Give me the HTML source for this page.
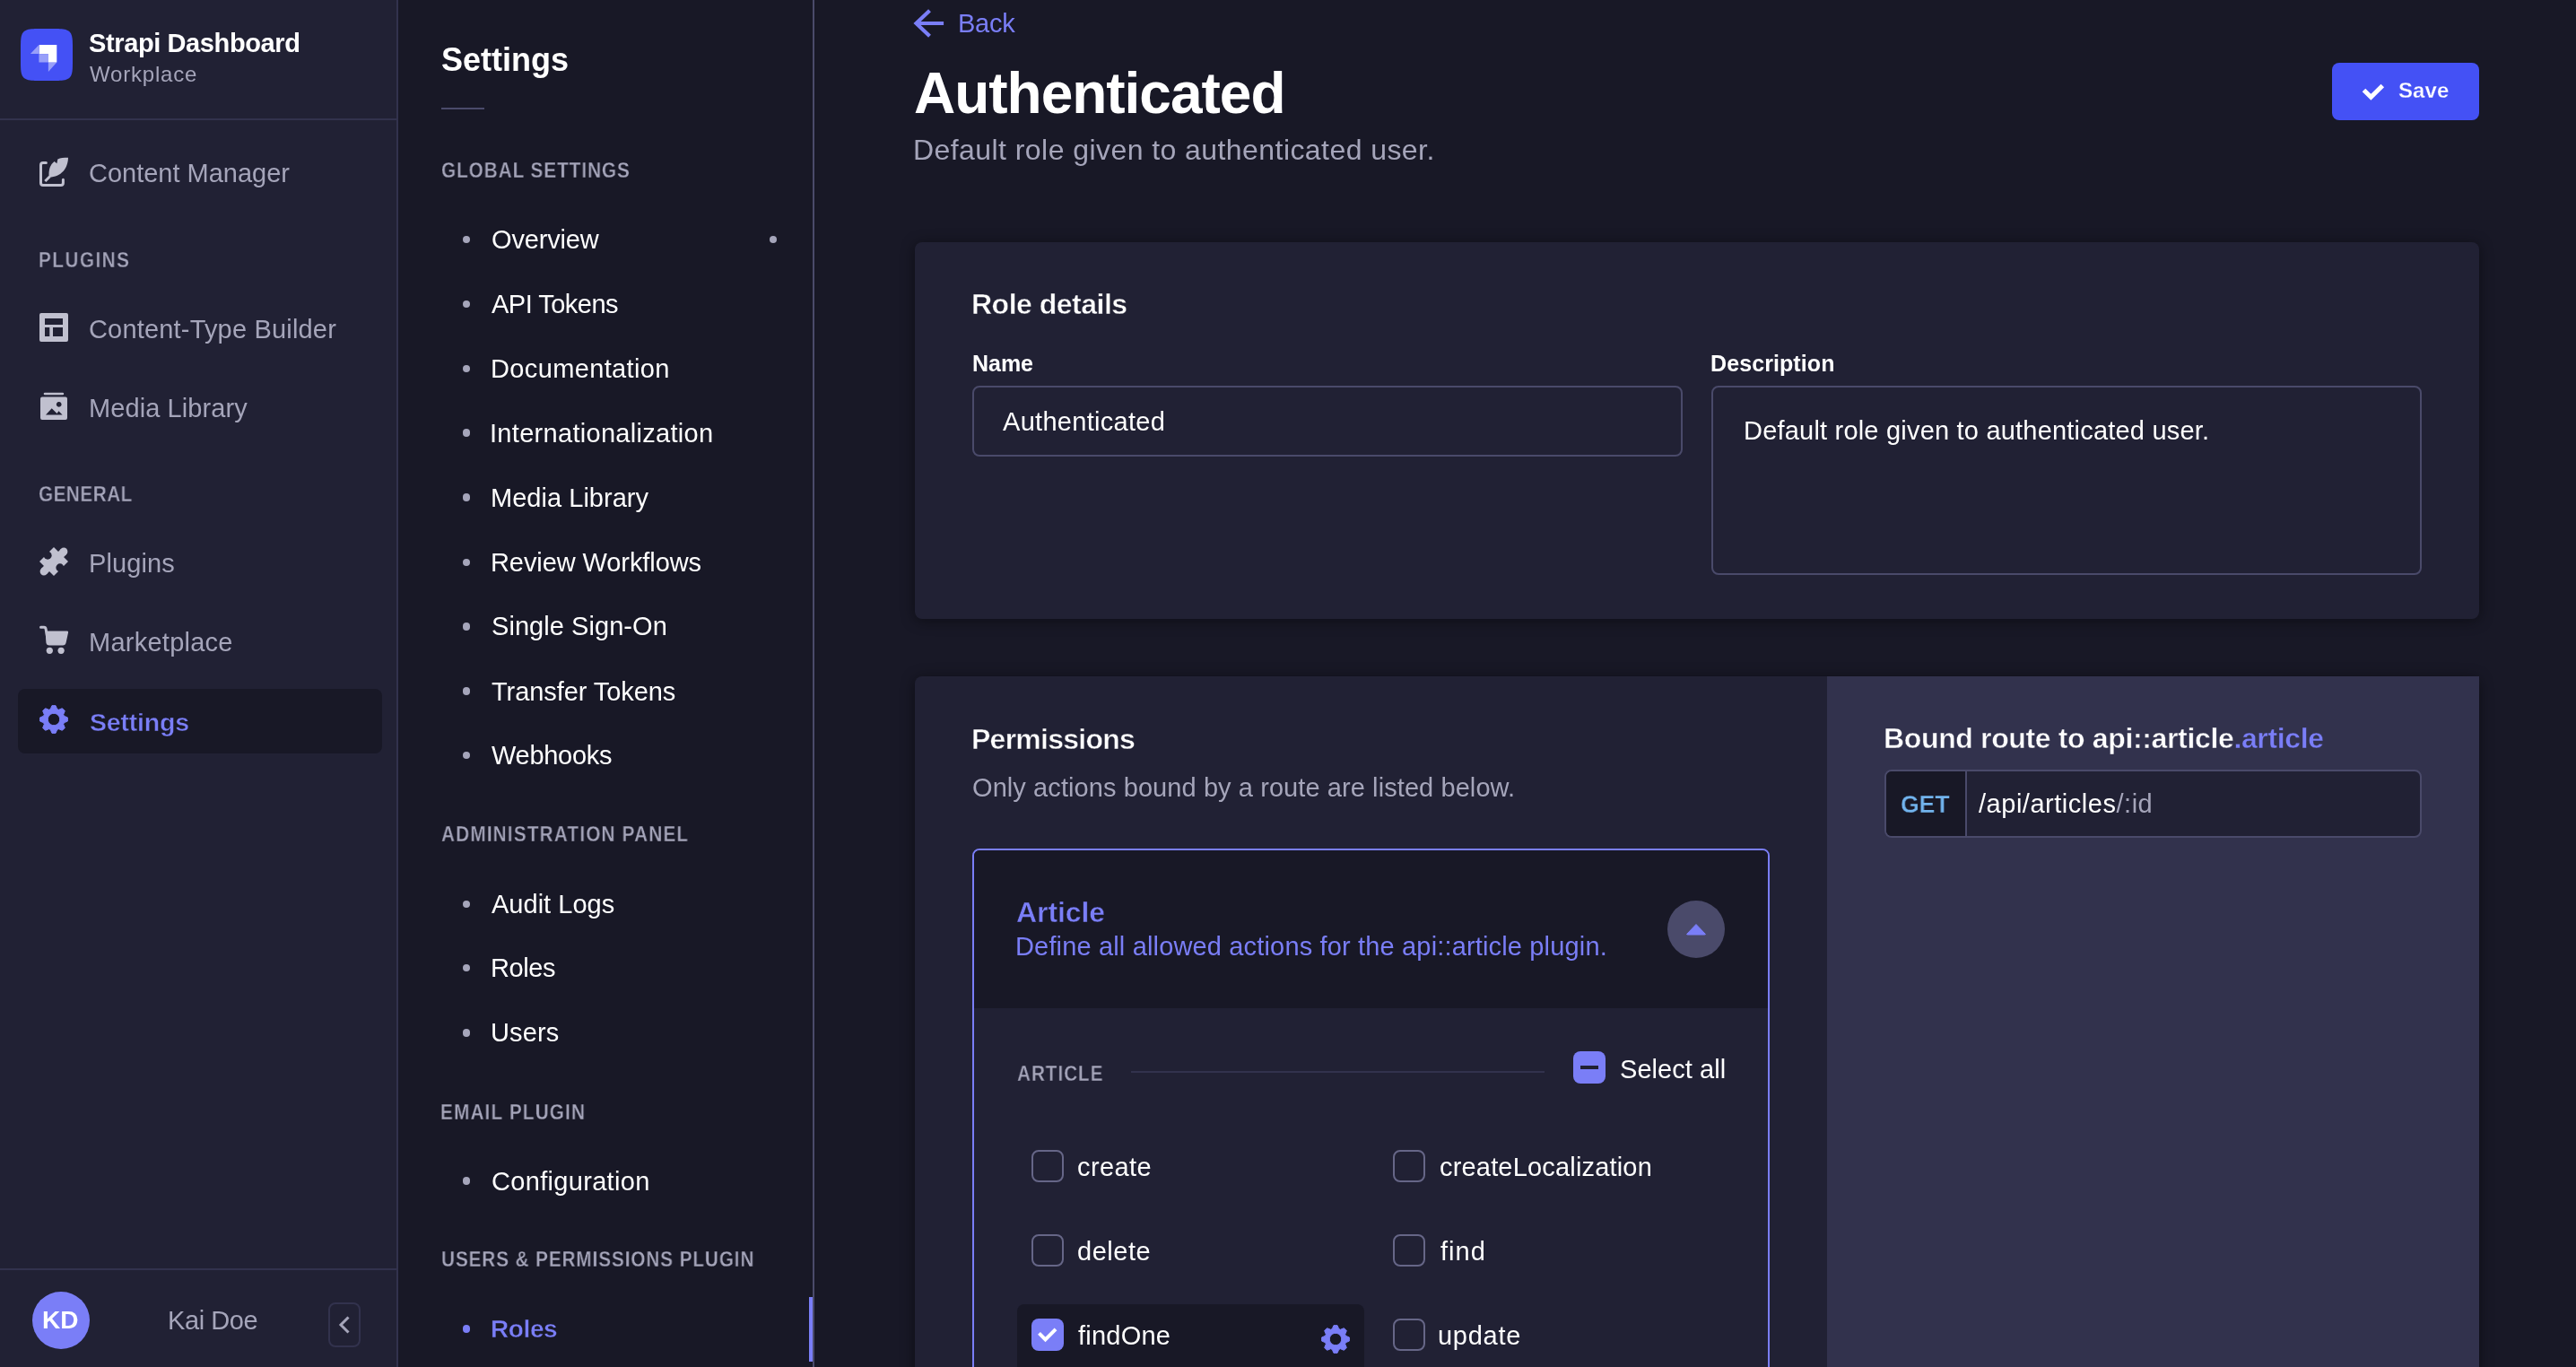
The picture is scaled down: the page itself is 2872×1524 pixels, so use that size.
<!DOCTYPE html>
<html><head><meta charset="utf-8"><title>Strapi - Authenticated role</title>
<style>
html,body{margin:0;padding:0}
body{width:2872px;height:1524px;overflow:hidden;position:relative;background:#181826;font-family:"Liberation Sans",sans-serif;}
body>div,body>svg{position:absolute}
.t{white-space:nowrap;-webkit-font-smoothing:antialiased;will-change:transform}
</style></head><body>
<div style="left:0px;top:0px;width:442px;height:1524px;background:#212134;border-radius:0px;"></div>
<div style="left:442px;top:0px;width:2px;height:1524px;background:#32324d;border-radius:0px;"></div>
<div style="left:0px;top:132px;width:442px;height:2px;background:#32324d;border-radius:0px;"></div>
<div style="left:0px;top:1414px;width:442px;height:2px;background:#32324d;border-radius:0px;"></div>
<svg style="left:23px;top:32px" width="58" height="58" viewBox="0 0 58 58">
<path d="M58.00 29.00 L57.99 37.94 L57.97 40.49 L57.93 42.31 L57.87 43.77 L57.80 45.01 L57.71 46.09 L57.60 47.05 L57.48 47.92 L57.33 48.72 L57.18 49.45 L57.00 50.13 L56.81 50.76 L56.60 51.35 L56.37 51.90 L56.12 52.42 L55.85 52.90 L55.56 53.36 L55.25 53.79 L54.92 54.19 L54.57 54.57 L54.19 54.92 L53.79 55.25 L53.36 55.56 L52.90 55.85 L52.42 56.12 L51.90 56.37 L51.35 56.60 L50.76 56.81 L50.13 57.00 L49.45 57.18 L48.72 57.33 L47.92 57.48 L47.05 57.60 L46.09 57.71 L45.01 57.80 L43.77 57.87 L42.31 57.93 L40.49 57.97 L37.94 57.99 L29.00 58.00 L20.06 57.99 L17.51 57.97 L15.69 57.93 L14.23 57.87 L12.99 57.80 L11.91 57.71 L10.95 57.60 L10.08 57.48 L9.28 57.33 L8.55 57.18 L7.87 57.00 L7.24 56.81 L6.65 56.60 L6.10 56.37 L5.58 56.12 L5.10 55.85 L4.64 55.56 L4.21 55.25 L3.81 54.92 L3.43 54.57 L3.08 54.19 L2.75 53.79 L2.44 53.36 L2.15 52.90 L1.88 52.42 L1.63 51.90 L1.40 51.35 L1.19 50.76 L1.00 50.13 L0.82 49.45 L0.67 48.72 L0.52 47.92 L0.40 47.05 L0.29 46.09 L0.20 45.01 L0.13 43.77 L0.07 42.31 L0.03 40.49 L0.01 37.94 L0.00 29.00 L0.01 20.06 L0.03 17.51 L0.07 15.69 L0.13 14.23 L0.20 12.99 L0.29 11.91 L0.40 10.95 L0.52 10.08 L0.67 9.28 L0.82 8.55 L1.00 7.87 L1.19 7.24 L1.40 6.65 L1.63 6.10 L1.88 5.58 L2.15 5.10 L2.44 4.64 L2.75 4.21 L3.08 3.81 L3.43 3.43 L3.81 3.08 L4.21 2.75 L4.64 2.44 L5.10 2.15 L5.58 1.88 L6.10 1.63 L6.65 1.40 L7.24 1.19 L7.87 1.00 L8.55 0.82 L9.28 0.67 L10.08 0.52 L10.95 0.40 L11.91 0.29 L12.99 0.20 L14.23 0.13 L15.69 0.07 L17.51 0.03 L20.06 0.01 L29.00 0.00 L37.94 0.01 L40.49 0.03 L42.31 0.07 L43.77 0.13 L45.01 0.20 L46.09 0.29 L47.05 0.40 L47.92 0.52 L48.72 0.67 L49.45 0.82 L50.13 1.00 L50.76 1.19 L51.35 1.40 L51.90 1.63 L52.42 1.88 L52.90 2.15 L53.36 2.44 L53.79 2.75 L54.19 3.08 L54.57 3.43 L54.92 3.81 L55.25 4.21 L55.56 4.64 L55.85 5.10 L56.12 5.58 L56.37 6.10 L56.60 6.65 L56.81 7.24 L57.00 7.87 L57.18 8.55 L57.33 9.28 L57.48 10.08 L57.60 10.95 L57.71 11.91 L57.80 12.99 L57.87 14.23 L57.93 15.69 L57.97 17.51 L57.99 20.06 Z" fill="#4451f5"/>
<path d="M20.7 18 H40.3 V37.5 H30.9 V28.1 H20.7 Z" fill="#fff"/>
<path d="M20.4 28.1 H30.9 V37.5 H20.4 Z" fill="#fff" fill-opacity="0.45"/>
<path d="M10.9 28.1 L20.4 18 V28.1 Z" fill="#fff" fill-opacity="0.45"/>
<path d="M30.9 37.5 H40.3 L30.9 48 Z" fill="#fff" fill-opacity="0.45"/>
</svg>
<div class="t" style="left:99.32px;top:33.85px;font-size:29px;line-height:29px;color:#ffffff;font-weight:700;letter-spacing:-0.383px;">Strapi Dashboard</div>
<div class="t" style="left:100.22px;top:71.28px;font-size:24px;line-height:24px;color:#a5a5ba;letter-spacing:0.808px;">Workplace</div>
<svg style="left:40px;top:170px" width="40" height="40" viewBox="0 0 40 40">
<path d="M11.4 11.5 H8 Q5.5 11.5 5.5 14 V33.9 Q5.5 36.4 8 36.4 H27.9 Q30.4 36.4 30.4 33.9 V30.2" fill="none" stroke="#c0c0cf" stroke-width="3" stroke-linecap="round"/>
<path d="M36 5.8 C35.8 17.5 28.5 27.3 14.8 27.7 C13.8 19.5 16 13.5 20.6 10 L23.4 12.3 L24.3 7.4 C27.5 6.2 31 5.8 36 5.8 Z" fill="#c0c0cf"/>
<path d="M10.3 32 L15.6 26.7" stroke="#c0c0cf" stroke-width="3"/>
</svg>
<div class="t" style="left:99.32px;top:179.45px;font-size:29px;line-height:29px;color:#a5a5ba;letter-spacing:-0.007px;">Content Manager</div>
<div class="t" style="left:43.18px;top:279.03px;font-size:23px;line-height:23px;color:#a5a5ba;font-weight:700;letter-spacing:1.643px;transform:scaleX(0.9);transform-origin:0 0;-webkit-text-stroke:0.3px #212134;">PLUGINS</div>
<svg style="left:44px;top:349px" width="32" height="32" viewBox="0 0 32 32">
<path fill-rule="evenodd" d="M2 0 H30 Q32 0 32 2 V30 Q32 32 30 32 H2 Q0 32 0 30 V2 Q0 0 2 0 Z M6 6 V13 H26 V6 Z M6 16 V26 H11.3 V16 Z M15 16 V26 H26 V16 Z" fill="#c0c0cf"/>
</svg>
<div class="t" style="left:99.32px;top:352.95px;font-size:29px;line-height:29px;color:#a5a5ba;letter-spacing:0.177px;">Content-Type Builder</div>
<svg style="left:44px;top:436px" width="32" height="34" viewBox="0 0 32 34">
<rect x="4.7" y="1.7" width="22.5" height="2.6" rx="1.3" fill="#c0c0cf"/>
<path fill-rule="evenodd" d="M3 6.6 H29 Q31 6.6 31 8.6 V30 Q31 32 29 32 H3 Q1 32 1 30 V8.6 Q1 6.6 3 6.6 Z M7 26.6 H25.6 L21.4 22.2 L19.5 25 L13.7 19.2 Z M21.7 12 A2.9 2.9 0 1 0 21.71 12 Z" fill="#c0c0cf"/>
</svg>
<div class="t" style="left:98.64px;top:440.75px;font-size:29px;line-height:29px;color:#a5a5ba;letter-spacing:0.082px;">Media Library</div>
<div class="t" style="left:43.16px;top:540.33px;font-size:23px;line-height:23px;color:#a5a5ba;font-weight:700;letter-spacing:0.572px;transform:scaleX(0.9);transform-origin:0 0;-webkit-text-stroke:0.3px #212134;">GENERAL</div>
<svg style="left:44px;top:610px" width="32" height="32" viewBox="0 0 32 32">
<defs><mask id="pzm"><rect x="-10" y="-10" width="52" height="52" fill="#fff"/>
<circle cx="6.3" cy="16" r="4.5" fill="#000"/><circle cx="25.7" cy="16" r="4.5" fill="#000"/></mask></defs>
<g transform="rotate(45 16 16)" mask="url(#pzm)" fill="#c0c0cf">
<rect x="4.7" y="4.7" width="22.6" height="22.6"/>
<rect x="11.7" y="0.3" width="8.6" height="5"/>
<circle cx="16" cy="0.3" r="4.3"/>
<rect x="11.7" y="26.7" width="8.6" height="5"/>
<circle cx="16" cy="31.7" r="4.3"/>
</g>
</svg>
<div class="t" style="left:98.64px;top:614.25px;font-size:29px;line-height:29px;color:#a5a5ba;letter-spacing:0.090px;">Plugins</div>
<svg style="left:44px;top:696px" width="34" height="36" viewBox="0 0 34 36">
<path d="M1.5 3.3 H5 Q6.8 3.3 7.1 5.2 L10 21.5" fill="none" stroke="#c0c0cf" stroke-width="3" stroke-linecap="round"/>
<path d="M6.6 7.4 H31 Q32.4 7.4 32.1 9 L29.6 20.6 Q29 23.6 26 23.6 H11 Q8 23.6 7.4 20.6 Z" fill="#c0c0cf"/>
<circle cx="11.3" cy="29.3" r="3.6" fill="#c0c0cf"/>
<circle cx="24.1" cy="29.3" r="3.6" fill="#c0c0cf"/>
</svg>
<div class="t" style="left:98.64px;top:702.05px;font-size:29px;line-height:29px;color:#a5a5ba;letter-spacing:0.254px;">Marketplace</div>
<div style="left:20px;top:768px;width:406px;height:72px;background:#181826;border-radius:8px;"></div>
<svg style="left:44px;top:786px" width="32" height="32" viewBox="0 0 32 32"><path fill-rule="evenodd" d="M12.29 4.59 L13.94 0.64 L18.06 0.64 L19.71 4.59 L21.45 5.31 L25.40 3.68 L28.32 6.60 L26.69 10.55 L27.41 12.29 L31.36 13.94 L31.36 18.06 L27.41 19.71 L26.69 21.45 L28.32 25.40 L25.40 28.32 L21.45 26.69 L19.71 27.41 L18.06 31.36 L13.94 31.36 L12.29 27.41 L10.55 26.69 L6.60 28.32 L3.68 25.40 L5.31 21.45 L4.59 19.71 L0.64 18.06 L0.64 13.94 L4.59 12.29 L5.31 10.55 L3.68 6.60 L6.60 3.68 L10.55 5.31 Z M16 9.3 A6.7 6.7 0 1 0 16.01 9.3 Z" fill="#7a7ef7" stroke="#7a7ef7" stroke-width="1" stroke-linejoin="round"/></svg>
<div class="t" style="left:99.90px;top:791.27px;font-size:28.5px;line-height:28.5px;color:#7a7ef7;font-weight:700;letter-spacing:-0.195px;-webkit-text-stroke:0.45px #181826;">Settings</div>
<div style="left:36px;top:1440px;width:64px;height:64px;background:#7a7ef7;border-radius:32px;"></div>
<div class="t" style="left:47.26px;top:1458.40px;font-size:28px;line-height:28px;color:#ffffff;font-weight:700;transform:scaleX(0.9985);transform-origin:0 0;">KD</div>
<div class="t" style="left:187.14px;top:1457.55px;font-size:29px;line-height:29px;color:#a5a5ba;letter-spacing:-0.410px;">Kai Doe</div>
<div style="left:366px;top:1452px;width:36px;height:50px;background:transparent;border-radius:8px;border:2px solid #32324d;box-sizing:border-box;"></div>
<svg style="left:366px;top:1452px" width="36" height="49" viewBox="0 0 36 49">
<path d="M22.5 16.5 L14 25 L22.5 33.5" fill="none" stroke="#a5a5ba" stroke-width="3"/>
</svg>
<div style="left:444px;top:0px;width:462px;height:1524px;background:#181826;border-radius:0px;"></div>
<div style="left:906px;top:0px;width:2px;height:1524px;background:#4a4a6a;border-radius:0px;"></div>
<div class="t" style="left:491.54px;top:49.23px;font-size:36px;line-height:36px;color:#ffffff;font-weight:700;letter-spacing:-0.011px;">Settings</div>
<div style="left:492px;top:120px;width:48px;height:2px;background:#4a4a6a;border-radius:0px;"></div>
<div class="t" style="left:492.08px;top:178.93px;font-size:23px;line-height:23px;color:#a5a5ba;font-weight:700;letter-spacing:1.078px;transform:scaleX(0.9);transform-origin:0 0;-webkit-text-stroke:0.3px #181826;">GLOBAL SETTINGS</div>
<div style="left:515.7px;top:262.59999999999997px;width:8.6px;height:8.6px;background:#a5a5ba;border-radius:5px;"></div>
<div class="t" style="left:547.54px;top:252.85px;font-size:29px;line-height:29px;color:#ffffff;letter-spacing:-0.162px;">Overview</div>
<div style="left:515.7px;top:334.59999999999997px;width:8.6px;height:8.6px;background:#a5a5ba;border-radius:5px;"></div>
<div class="t" style="left:548.44px;top:324.85px;font-size:29px;line-height:29px;color:#ffffff;letter-spacing:-0.511px;">API Tokens</div>
<div style="left:515.7px;top:406.5px;width:8.6px;height:8.6px;background:#a5a5ba;border-radius:5px;"></div>
<div class="t" style="left:546.64px;top:396.75px;font-size:29px;line-height:29px;color:#ffffff;letter-spacing:0.365px;">Documentation</div>
<div style="left:515.7px;top:478.4px;width:8.6px;height:8.6px;background:#a5a5ba;border-radius:5px;"></div>
<div class="t" style="left:545.74px;top:468.65px;font-size:29px;line-height:29px;color:#ffffff;letter-spacing:0.301px;">Internationalization</div>
<div style="left:515.7px;top:550.3000000000001px;width:8.6px;height:8.6px;background:#a5a5ba;border-radius:5px;"></div>
<div class="t" style="left:546.64px;top:540.55px;font-size:29px;line-height:29px;color:#ffffff;letter-spacing:0.030px;">Media Library</div>
<div style="left:515.7px;top:622.5px;width:8.6px;height:8.6px;background:#a5a5ba;border-radius:5px;"></div>
<div class="t" style="left:546.64px;top:612.75px;font-size:29px;line-height:29px;color:#ffffff;letter-spacing:-0.087px;">Review Workflows</div>
<div style="left:515.7px;top:694.1px;width:8.6px;height:8.6px;background:#a5a5ba;border-radius:5px;"></div>
<div class="t" style="left:547.54px;top:684.35px;font-size:29px;line-height:29px;color:#ffffff;letter-spacing:0.058px;">Single Sign-On</div>
<div style="left:515.7px;top:766.3000000000001px;width:8.6px;height:8.6px;background:#a5a5ba;border-radius:5px;"></div>
<div class="t" style="left:547.54px;top:756.55px;font-size:29px;line-height:29px;color:#ffffff;letter-spacing:-0.074px;">Transfer Tokens</div>
<div style="left:515.7px;top:837.9000000000001px;width:8.6px;height:8.6px;background:#a5a5ba;border-radius:5px;"></div>
<div class="t" style="left:548.44px;top:828.15px;font-size:29px;line-height:29px;color:#ffffff;letter-spacing:-0.278px;">Webhooks</div>
<div style="left:857.7px;top:262.6px;width:8.6px;height:8.6px;background:#a5a5ba;border-radius:5px;"></div>
<div class="t" style="left:492.08px;top:919.33px;font-size:23px;line-height:23px;color:#a5a5ba;font-weight:700;letter-spacing:1.335px;transform:scaleX(0.9);transform-origin:0 0;-webkit-text-stroke:0.3px #181826;">ADMINISTRATION PANEL</div>
<div style="left:515.7px;top:1003.5px;width:8.6px;height:8.6px;background:#a5a5ba;border-radius:5px;"></div>
<div class="t" style="left:548.44px;top:993.75px;font-size:29px;line-height:29px;color:#ffffff;letter-spacing:0.020px;">Audit Logs</div>
<div style="left:515.7px;top:1074.8px;width:8.6px;height:8.6px;background:#a5a5ba;border-radius:5px;"></div>
<div class="t" style="left:546.64px;top:1065.05px;font-size:29px;line-height:29px;color:#ffffff;letter-spacing:-0.435px;">Roles</div>
<div style="left:515.7px;top:1147.2px;width:8.6px;height:8.6px;background:#a5a5ba;border-radius:5px;"></div>
<div class="t" style="left:546.64px;top:1137.45px;font-size:29px;line-height:29px;color:#ffffff;letter-spacing:0.120px;">Users</div>
<div class="t" style="left:491.18px;top:1228.53px;font-size:23px;line-height:23px;color:#a5a5ba;font-weight:700;letter-spacing:1.316px;transform:scaleX(0.9);transform-origin:0 0;-webkit-text-stroke:0.3px #181826;">EMAIL PLUGIN</div>
<div style="left:515.7px;top:1312.4px;width:8.6px;height:8.6px;background:#a5a5ba;border-radius:5px;"></div>
<div class="t" style="left:547.54px;top:1302.65px;font-size:29px;line-height:29px;color:#ffffff;letter-spacing:0.317px;">Configuration</div>
<div class="t" style="left:492.08px;top:1393.33px;font-size:23px;line-height:23px;color:#a5a5ba;font-weight:700;letter-spacing:1.018px;transform:scaleX(0.9);transform-origin:0 0;-webkit-text-stroke:0.3px #181826;">USERS &amp; PERMISSIONS PLUGIN</div>
<div style="left:515.7px;top:1477.2px;width:8.6px;height:8.6px;background:#7a7ef7;border-radius:5px;"></div>
<div class="t" style="left:547.00px;top:1468.30px;font-size:28px;line-height:28px;color:#7a7ef7;font-weight:700;letter-spacing:-0.400px;-webkit-text-stroke:0.45px #181826;">Roles</div>
<div style="left:902px;top:1446px;width:4px;height:72px;background:#7a7ef7;border-radius:0px;"></div>
<svg style="left:1016px;top:8px" width="40" height="36" viewBox="0 0 40 36">
<path d="M36.1 18 H5.5 M20.5 3.8 L5.5 18 L20.5 32.2" fill="none" stroke="#7a7ef7" stroke-width="4.2"/>
</svg>
<div class="t" style="left:1067.64px;top:11.55px;font-size:29px;line-height:29px;color:#7a7ef7;letter-spacing:-0.247px;">Back</div>
<div class="t" style="left:1019.20px;top:71.82px;font-size:64px;line-height:64px;color:#ffffff;font-weight:700;letter-spacing:-1.017px;">Authenticated</div>
<div class="t" style="left:1018.30px;top:150.51px;font-size:32px;line-height:32px;color:#a5a5ba;letter-spacing:0.435px;">Default role given to authenticated user.</div>
<div style="left:2600px;top:70px;width:164px;height:64px;background:#4451f5;border-radius:8px;"></div>
<svg style="left:2630px;top:86.5px" width="32" height="28" viewBox="0 0 32 28">
<path d="M5.5 13.4 L13.4 21.3 L26.3 8.4" fill="none" stroke="#fff" stroke-width="5"/>
</svg>
<div class="t" style="left:2673.60px;top:89.38px;font-size:24px;line-height:24px;color:#ffffff;font-weight:700;letter-spacing:0.100px;-webkit-text-stroke:0.3px #4451f5;">Save</div>
<div style="left:1020px;top:270px;width:1744px;height:420px;background:#212134;border-radius:8px;box-shadow:0 2px 16px rgba(3,3,5,0.45);"></div>
<div class="t" style="left:1083.20px;top:323.11px;font-size:32px;line-height:32px;color:#ffffff;font-weight:700;letter-spacing:-0.500px;-webkit-text-stroke:0.45px #212134;">Role details</div>
<div class="t" style="left:1083.70px;top:392.84px;font-size:25px;line-height:25px;color:#ffffff;font-weight:700;letter-spacing:-0.027px;">Name</div>
<div class="t" style="left:1907.20px;top:393.44px;font-size:25px;line-height:25px;color:#ffffff;font-weight:700;letter-spacing:0.094px;">Description</div>
<div style="left:1084px;top:430px;width:792px;height:79px;background:#212134;border-radius:8px;border:2px solid #4a4a6a;box-sizing:border-box;"></div>
<div class="t" style="left:1118.44px;top:456.05px;font-size:29px;line-height:29px;color:#ffffff;letter-spacing:0.293px;">Authenticated</div>
<div style="left:1908px;top:430px;width:792px;height:211px;background:#212134;border-radius:8px;border:2px solid #4a4a6a;box-sizing:border-box;"></div>
<div class="t" style="left:1943.86px;top:466.05px;font-size:29px;line-height:29px;color:#ffffff;letter-spacing:0.200px;">Default role given to authenticated user.</div>
<div style="left:1020px;top:754px;width:1744px;height:800px;background:#212134;border-radius:8px;box-shadow:0 2px 16px rgba(3,3,5,0.45);"></div>
<div style="left:2037px;top:754px;width:727px;height:800px;background:#32324d;border-radius:0px;"></div>
<div class="t" style="left:1082.98px;top:807.71px;font-size:32px;line-height:32px;color:#ffffff;font-weight:700;letter-spacing:-0.746px;-webkit-text-stroke:0.45px #212134;">Permissions</div>
<div class="t" style="left:1083.88px;top:863.85px;font-size:29px;line-height:29px;color:#a5a5ba;letter-spacing:0.082px;">Only actions bound by a route are listed below.</div>
<div style="left:1084px;top:946px;width:889px;height:650px;background:#212134;border-radius:8px;border:2px solid #7a7ef7;box-sizing:border-box;overflow:hidden;"></div>
<div style="left:1086px;top:948px;width:885px;height:176px;background:#181826;border-radius:0px;border-top-left-radius:6px;border-top-right-radius:6px;"></div>
<div class="t" style="left:1133.26px;top:1000.91px;font-size:32px;line-height:32px;color:#7a7ef7;font-weight:700;letter-spacing:-0.077px;-webkit-text-stroke:0.45px #181826;">Article</div>
<div class="t" style="left:1132.36px;top:1041.25px;font-size:29px;line-height:29px;color:#7a7ef7;letter-spacing:0.157px;">Define all allowed actions for the api::article plugin.</div>
<div style="left:1859px;top:1004px;width:64px;height:64px;background:#4a4a6a;border-radius:32px;"></div>
<svg style="left:1875px;top:1024px" width="32" height="24" viewBox="0 0 32 24">
<path d="M16 6.5 L26 17 Q27 18 25.6 18 H6.4 Q5 18 6 17 Z" fill="#7a7ef7" stroke="#7a7ef7" stroke-width="1" stroke-linejoin="round"/>
</svg>
<div class="t" style="left:1134.09px;top:1185.53px;font-size:23px;line-height:23px;color:#a5a5ba;font-weight:700;letter-spacing:1.067px;transform:scaleX(0.9);transform-origin:0 0;-webkit-text-stroke:0.3px #212134;">ARTICLE</div>
<div style="left:1261px;top:1194px;width:461px;height:2px;background:#32324d;border-radius:0px;"></div>
<div style="left:1754px;top:1172px;width:36px;height:36px;background:#7a7ef7;border-radius:8px;"></div>
<div style="left:1762px;top:1188px;width:20px;height:4px;background:#212134;border-radius:0px;"></div>
<div class="t" style="left:1805.54px;top:1178.05px;font-size:29px;line-height:29px;color:#ffffff;letter-spacing:0.060px;">Select all</div>
<div style="left:1134px;top:1454px;width:387px;height:100px;background:#181826;border-radius:8px;"></div>
<div style="left:1150px;top:1282px;width:36px;height:36px;background:#212134;border-radius:8px;border:2px solid #666687;box-sizing:border-box;"></div>
<div class="t" style="left:1201.04px;top:1287.45px;font-size:29px;line-height:29px;color:#ffffff;letter-spacing:0.384px;">create</div>
<div style="left:1553.4px;top:1282px;width:36px;height:36px;background:#212134;border-radius:8px;border:2px solid #666687;box-sizing:border-box;"></div>
<div class="t" style="left:1604.66px;top:1287.45px;font-size:29px;line-height:29px;color:#ffffff;letter-spacing:0.179px;">createLocalization</div>
<div style="left:1150px;top:1376px;width:36px;height:36px;background:#212134;border-radius:8px;border:2px solid #666687;box-sizing:border-box;"></div>
<div class="t" style="left:1201.04px;top:1381.45px;font-size:29px;line-height:29px;color:#ffffff;letter-spacing:0.528px;">delete</div>
<div style="left:1553.4px;top:1376px;width:36px;height:36px;background:#212134;border-radius:8px;border:2px solid #666687;box-sizing:border-box;"></div>
<div class="t" style="left:1605.56px;top:1381.45px;font-size:29px;line-height:29px;color:#ffffff;letter-spacing:1.047px;">find</div>
<div style="left:1150px;top:1470px;width:36px;height:36px;background:#7a7ef7;border-radius:8px;"></div>
<svg style="left:1150px;top:1470px" width="36" height="36" viewBox="0 0 36 36"><path d="M8.5 16.3 L15.5 23.3 L27 11.8" fill="none" stroke="#fff" stroke-width="4"/></svg>
<div class="t" style="left:1201.94px;top:1475.45px;font-size:29px;line-height:29px;color:#ffffff;letter-spacing:0.227px;">findOne</div>
<div style="left:1553.4px;top:1470px;width:36px;height:36px;background:#212134;border-radius:8px;border:2px solid #666687;box-sizing:border-box;"></div>
<div class="t" style="left:1602.86px;top:1475.45px;font-size:29px;line-height:29px;color:#ffffff;letter-spacing:0.732px;">update</div>
<svg style="left:1473px;top:1477px" width="32" height="32" viewBox="0 0 32 32"><path fill-rule="evenodd" d="M12.29 4.59 L13.94 0.64 L18.06 0.64 L19.71 4.59 L21.45 5.31 L25.40 3.68 L28.32 6.60 L26.69 10.55 L27.41 12.29 L31.36 13.94 L31.36 18.06 L27.41 19.71 L26.69 21.45 L28.32 25.40 L25.40 28.32 L21.45 26.69 L19.71 27.41 L18.06 31.36 L13.94 31.36 L12.29 27.41 L10.55 26.69 L6.60 28.32 L3.68 25.40 L5.31 21.45 L4.59 19.71 L0.64 18.06 L0.64 13.94 L4.59 12.29 L5.31 10.55 L3.68 6.60 L6.60 3.68 L10.55 5.31 Z M16 9.3 A6.7 6.7 0 1 0 16.01 9.3 Z" fill="#7a7ef7" stroke="#7a7ef7" stroke-width="1" stroke-linejoin="round"/></svg>
<div class="t" style="left:2099.98px;top:807.31px;font-size:32px;line-height:32px;color:#ffffff;font-weight:700;letter-spacing:-0.357px;-webkit-text-stroke:0.45px #32324d;">Bound route to api::article<span style="color:#7a7ef7">.article</span></div>
<div style="left:2101px;top:858px;width:599px;height:76px;background:#212134;border-radius:8px;border:2px solid #4a4a6a;box-sizing:border-box;overflow:hidden;"></div>
<div style="left:2103px;top:860px;width:88px;height:72px;background:#181826;border-radius:0px;border-top-left-radius:6px;border-bottom-left-radius:6px;"></div>
<div style="left:2191px;top:860px;width:2px;height:72px;background:#4a4a6a;border-radius:0px;"></div>
<div class="t" style="left:2119.16px;top:882.70px;font-size:28px;line-height:28px;color:#72b4ee;font-weight:700;transform:scaleX(0.9465);transform-origin:0 0;-webkit-text-stroke:0.3px #181826;">GET</div>
<div class="t" style="left:2206.44px;top:881.85px;font-size:29px;line-height:29px;color:#ffffff;letter-spacing:0.522px;">/api/articles<span style="color:#a5a5ba">/:id</span></div>
</body></html>
